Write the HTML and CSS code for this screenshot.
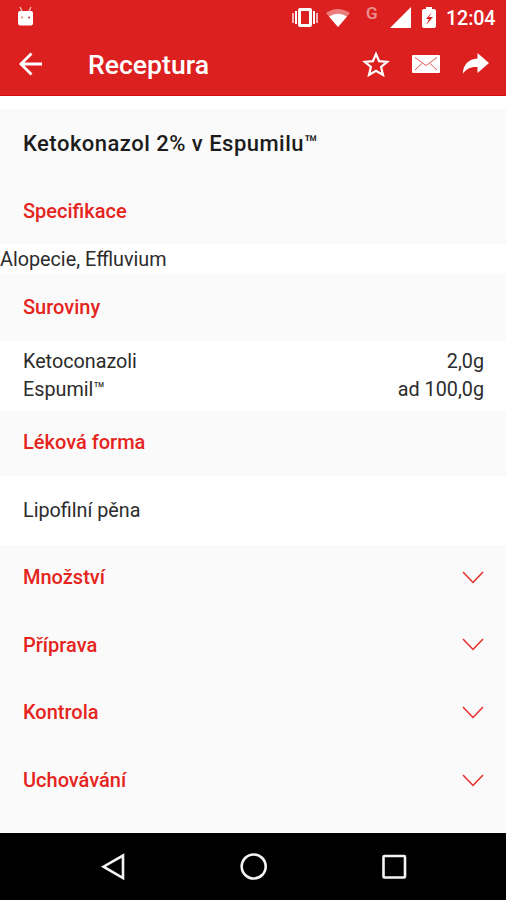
FILE: index.html
```html
<!DOCTYPE html>
<html lang="cs">
<head>
<meta charset="utf-8">
<title>Receptura</title>
<link rel="stylesheet" href="styles.css">
</head>
<body>
<header class="header">
  <div class="status">
    <svg class="debug" width="18" height="20" viewBox="0 0 18 20"><path d="M3 1l2 4M14 1l-2 4" stroke="#fff" stroke-opacity=".75" stroke-width="1.3"/><path d="M1 7q0-2 2-2h11q2 0 2 2v10q0 2.500-2.500 2.500h-10Q1 19.500 1 17z" fill="#fff"/><circle cx="5" cy="11.500" r="1" fill="#e77"/><circle cx="12" cy="11.500" r="1" fill="#b33"/></svg>
    <svg width="136" height="26" viewBox="0 0 136 26" fill="#fff"><path d="M0 10h2v10H0zM24 10h2v10h-2z" fill-opacity=".65"/><path d="M3 8h2v13H3zM21 8h2v13h-2z"/><path fill-rule="evenodd" d="M8 5h10q2 0 2 2v15q0 2-2 2H8q-2 0-2-2V7q0-2 2-2zM9 8v13h8V8z"/><path d="M34 10q11.500-8 24 0L46 24z" fill-opacity=".42"/><path d="M37 13.500q9-5.500 18 0L46 24z"/><path d="M98 25h21V4z"/></svg>
    <span class="network">G</span>
    <svg class="battery" width="14" height="21" viewBox="0 0 14 21"><path fill="#fff" d="M4 0h6v2h2q2 0 2 2v15q0 2-2 2H2q-2 0-2-2V4q0-2 2-2h2z"/><path fill="#dc2020" d="M10 5L4 12h3l-3 6 7-8H7z"/></svg>
    <time>12:04</time>
  </div>
  <div class="toolbar">
    <svg class="back" width="26" height="24" viewBox="0 0 26 24" fill="none" stroke="#fff" stroke-width="2.800"><path d="M13.500 1.500L3 12l10.500 10.500M2 12h22"/></svg>
    <h1>Receptura</h1>
    <svg class="star" width="28" height="26" viewBox="0 0 28 26"><path d="M14 3l3.100 7.100 8.100.7-6.100 5.200 1.900 7.900-7-4.200-7 4.200L8.900 16l-6.100-5.200 8.100-.7z" fill="none" stroke="#fff" stroke-width="2.200"/></svg>
    <svg class="mail" width="28" height="18" viewBox="0 0 28 18"><rect width="28" height="18" rx="1" fill="#fff"/><path d="M3 2.500l11 8 11-8M3 15l7-6.500M25 15l-7-6.500" fill="none" stroke="#dc2020" stroke-width="1" stroke-opacity=".75"/></svg>
    <svg class="share" width="28" height="22" viewBox="0 0 28 22"><path d="M15.500 0L27 10 15.500 20v-6C9 13.500 4 15.500.8 21 1 12 6.500 6 15.500 5.500z" fill="#fff"/></svg>
  </div>
</header>
<main>
  <h2 class="name">Ketokonazol 2% v Espumilu™</h2>
  <h3 class="section spec">Specifikace</h3>
  <p class="diagnosis">Alopecie, Effluvium</p>
  <h3 class="section ingr">Suroviny</h3>
  <dl class="ingredients">
    <div><dt>Ketoconazoli</dt><dd>2,0g</dd></div>
    <div><dt>Espumil™</dt><dd>ad 100,0g</dd></div>
  </dl>
  <h3 class="section form">Léková forma</h3>
  <p class="form-value">Lipofilní pěna</p>
  <div class="folds">
    <h3 class="fold">Množství<svg width="22" height="13" viewBox="0 0 22 13"><path d="M1 1l10 10.500L21 1"/></svg></h3>
    <h3 class="fold">Příprava<svg width="22" height="13" viewBox="0 0 22 13"><path d="M1 1l10 10.500L21 1"/></svg></h3>
    <h3 class="fold">Kontrola<svg width="22" height="13" viewBox="0 0 22 13"><path d="M1 1l10 10.500L21 1"/></svg></h3>
    <h3 class="fold">Uchovávání<svg width="22" height="13" viewBox="0 0 22 13"><path d="M1 1l10 10.500L21 1"/></svg></h3>
  </div>
</main>
<nav class="nav">
  <svg width="26" height="28" viewBox="0 0 26 28"><path d="M23 2.500v22.500L3.500 13.700z"/></svg>
  <svg width="28" height="28" viewBox="0 0 28 28"><circle cx="13.700" cy="13.500" r="12"/></svg>
  <svg width="26" height="26" viewBox="0 0 26 26"><rect x="2.500" y="2" width="21.500" height="21.500" rx="1"/></svg>
</nav>
</body>
</html>
```
FILE: styles.css
```css
* { box-sizing: border-box; }
body { margin: 0; height: 900px; display: flex; flex-direction: column; overflow: hidden; background: #fff; color: #2c2c2c; font: 400 19.75px/28px Roboto, sans-serif; }
h1, h2, h3, p, dl, dd { margin: 0; }
svg { display: block; flex: none; }
.header { height: 96px; background: #dc2020; color: #fff; border-bottom: 1px solid #d60d10; }
.status { display: flex; height: 36px; align-items: flex-start; padding: 3px 10px 0 17px; position: relative; }
.debug { margin: 3px 257px 0 0; }
.network { position: absolute; left: 366px; top: 2px; font-size: 17px; line-height: 22px; font-weight: 500; opacity: .5; }
.battery { margin: 4px 10px 0 -6px; }
time { font-size: 19.7px; font-weight: 500; line-height: 31px; letter-spacing: -.1px; white-space: nowrap; }
.toolbar { height: 56px; display: flex; align-items: center; padding: 0 16px 0 18px; }
.back { margin-right: 44px; }
h1 { font-size: 26.6px; font-weight: 500; line-height: 55px; width: 274px; }
.mail { margin: 0 22px; }
main { flex: 1; }
.name { margin-top: 13px; height: 68px; background: #fafafa; padding-left: 23px; font-size: 22px; line-height: 69px; font-weight: 500; letter-spacing: .48px; color: #1c1c1c; }
.section, .fold { color: #e52420; font-size: 20px; font-weight: 500; }
.section { background: #fafafa; padding-left: 23px; }
.spec { height: 67px; line-height: 69px; }
.diagnosis { height: 30px; line-height: 31px; }
.ingr { height: 67px; line-height: 67px; }
.ingredients { height: 70px; padding: 7px 22px 0 23px; }
.ingredients div { display: flex; justify-content: space-between; }
.form { height: 65px; line-height: 62px; }
.form-value { height: 69px; line-height: 69px; padding-left: 23px; }
.folds { background: #fafafa; height: 288px; padding: 0 22px 0 23px; display: grid; grid-template-rows: repeat(4, 67.6px); align-content: start; }
.fold { display: flex; align-items: center; justify-content: space-between; padding-bottom: 3px; }
.fold path { fill: none; stroke: #e62c2a; stroke-width: 1.5; }
.nav { height: 67px; background: #000; display: flex; align-items: center; justify-content: space-between; padding: 0 99px 0 100px; }
.nav svg { fill: none; stroke: #f4f4f4; stroke-width: 2.6; }
```
